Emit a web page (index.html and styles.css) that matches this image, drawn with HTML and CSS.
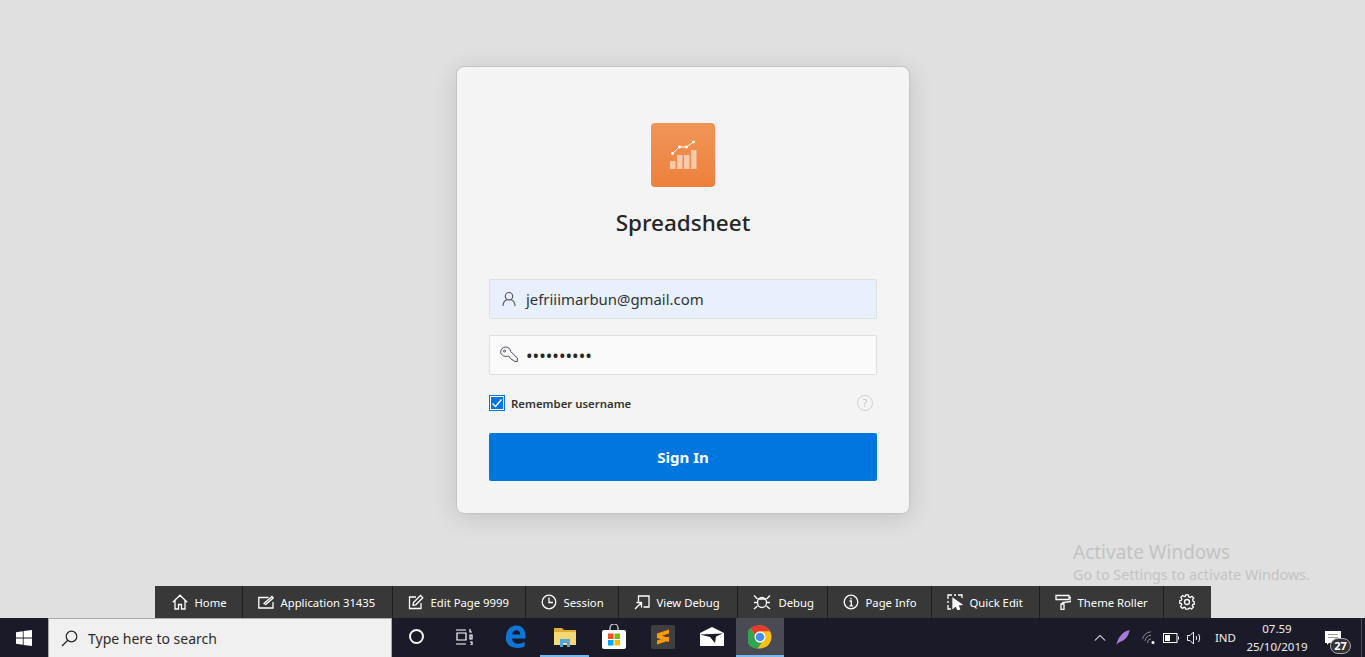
FILE: index.html
```html
<!DOCTYPE html>
<html>
<head>
    <meta charset="UTF-8">
    <title>Spreadsheet - Sign In</title>
    <link rel="stylesheet" href="styles.css">
</head>
<body>
<div class="page">
    <!-- login -->
    <main class="stage">
        <form class="card">
            <div class="logo">
                <svg width="32" height="32" viewBox="0 0 32 32">
                    <g fill="#fff" fill-opacity=".55">
                        <rect x="3" y="22" width="5.500" height="8"/>
                        <rect x="10" y="16" width="5.500" height="14"/>
                        <rect x="17" y="16" width="5.500" height="14"/>
                        <rect x="24" y="11" width="5.500" height="19"/>
                    </g>
                    <polyline points="5.500,14.500 12.500,8 19.500,8 26.500,3" fill="none" stroke="#fff" stroke-width="1"/>
                    <g fill="#fff">
                        <circle cx="5.500" cy="14.500" r="1.400"/>
                        <circle cx="12.500" cy="8" r="1.400"/>
                        <circle cx="19.500" cy="8" r="1.400"/>
                        <circle cx="26.500" cy="3" r="1.400"/>
                    </g>
                </svg>
            </div>
            <h1 class="title">Spreadsheet</h1>

            <div class="field field-filled">
                <svg class="field-icon" width="16" height="16" viewBox="0 0 16 16" fill="none" stroke="#4a4f57" stroke-width="1.100">
                    <circle cx="8" cy="5.200" r="3.700"/>
                    <path d="M2 15c0-3.400 2.200-5.700 3.900-6.300M14 15c0-3.400-2.200-5.700-3.900-6.300"/>
                </svg>
                <span class="field-text">jefriiimarbun@gmail.com</span>
            </div>

            <div class="field field-secret">
                <svg class="field-icon" width="18" height="18" viewBox="0 0 18 18" fill="none" stroke="#4a4f57" stroke-width="1">
                    <path d="M.7 6C.7 3 3 1 5.700 1 8.500 1 10.500 3 10.700 5.500L17.300 12V15.500H14.500L13.500 14H12L11 12.500 9.500 11.500 8.700 10C5.500 11 .7 10 .7 6Z"/>
                    <circle cx="4.500" cy="5" r="1"/>
                </svg>
                <span class="field-text dots">••••••••••</span>
            </div>

            <div class="remember">
                <span class="check">
                    <svg width="14" height="14" viewBox="0 0 14 14" fill="none" stroke="#fff" stroke-width="1.400"><path d="M2.500 7.500L5.500 10.500 11.500 3.500"/></svg>
                </span>
                <span class="remember-label">Remember username</span>
                <span class="help">?</span>
            </div>

            <div class="signin">Sign In</div>
        </form>
    </main>

    <!-- developer toolbar -->
    <nav class="devbar">
        <a class="dev-item dev-item-home">
            <svg class="dev-icon" viewBox="0 0 16 16"><path d="M.8 8.200L8 1.200l7.200 7M3 6.500V15h3.500v-4.500h3V15H13V6.500"/></svg>Home
        </a>
        <a class="dev-item">
            <svg class="dev-icon" viewBox="0 0 16 16"><path d="M15 8v6H.8V3.500h9.700M6 9.500l8-7 1.200 1.500-7.500 6.500z"/></svg>Application 31435
        </a>
        <a class="dev-item">
            <svg class="dev-icon" viewBox="0 0 16 16"><path d="M13 9v5.500H1.500V3H8M5.500 8.500L12.500 1.500 14.800 3.800 7.800 10.800 5 11.300z"/></svg>Edit Page 9999
        </a>
        <a class="dev-item">
            <svg class="dev-icon" viewBox="0 0 16 16"><circle cx="8" cy="8" r="6.800"/><path d="M8 3.500V8.500H12"/></svg>Session
        </a>
        <a class="dev-item">
            <svg class="dev-icon" viewBox="0 0 16 16"><path d="M4.500 7.500V2H15V13H9.500M1 15L7 9M2.500 8.500H7.500V13.500"/></svg>View Debug
        </a>
        <a class="dev-item">
            <svg class="dev-icon dev-icon-wide" viewBox="0 0 18 16"><ellipse cx="9" cy="8.500" rx="4.500" ry="5"/><path d="M5 5h8M1 1.500l3.500 3.500M17 1.500L13.500 5M1 8.500h3.500M17 8.500h-3.500M1 15l3.500-3M17 15l-3.500-3"/></svg>Debug
        </a>
        <a class="dev-item">
            <svg class="dev-icon" viewBox="0 0 16 16"><circle cx="8" cy="8" r="6.800"/><path d="M6.500 7H8.300V11.800M6.500 11.800H10M8 3.800V5.500"/></svg>Page Info
        </a>
        <a class="dev-item">
            <svg class="dev-icon" viewBox="0 0 16 16"><path d="M1 5V1H5M7 1H9M11 1H15V4M1 7V9M1 11V15H4"/><path class="dev-fill" d="M6 4.500L14.500 10.500 10.800 10.800 12.500 15 10.800 15.700 9 11.500 6 14z"/></svg>Quick Edit
        </a>
        <a class="dev-item">
            <svg class="dev-icon" viewBox="0 0 16 16"><path d="M1 1.500H14V5.500H1zM14 3.500H16V7.500L7.500 8.500V10M6 10H9V15.500H6z"/></svg>Theme Roller
        </a>
        <a class="dev-item dev-item-gear">
            <svg class="dev-icon" viewBox="0 0 16 16"><circle cx="8" cy="8" r="2.500"/><path d="M6.700 .8H9.300L9.700 2.800 11.100 3.400 12.900 2.300 14.700 4.100 13.600 5.900 14.200 7.300 15.200 7.700V10.300L13.900 10.300 13.300 11.400 14.400 13.200 12.600 15 10.800 13.900 9.700 14.400 9.300 15.200H6.700L6.300 13.700 5.200 13.300 3.400 14.400 1.600 12.600 2.700 10.800 2.100 9.400 .8 9.300V6.700L2.400 6.300 2.900 5.100 1.800 3.300 3.600 1.500 5.400 2.600 6.400 2.200z"/></svg>
        </a>
    </nav>

    <!-- windows taskbar -->
    <footer class="taskbar">
        <div class="start">
            <svg width="16" height="16" viewBox="0 0 16 16" fill="#fff"><path d="M0 2.200L6.800 1.200V7.600H0zM7.600 1.100L16 0V7.600H7.600zM0 8.400H6.800V14.800L0 13.800zM7.600 8.400H16V16L7.600 14.900z"/></svg>
        </div>
        <div class="search">
            <svg width="17" height="17" viewBox="0 0 17 17" fill="none" stroke="#222" stroke-width="1.200"><circle cx="10.500" cy="6.500" r="5.300"/><path d="M6.800 10.300L1 16"/></svg>
            <span>Type here to search</span>
        </div>
        <div class="tile tile-sys"><span class="cortana"></span></div>
        <div class="tile tile-sys">
            <svg width="17" height="16" viewBox="0 0 17 16" fill="none" stroke="#fff" stroke-width="1.200"><path d="M0 1h10M0 15h10M1 4h9v7H1zM14 0v3h2M14 6h2v4h-2zM14 13h2v3h-2"/></svg>
        </div>
        <div class="tile tile-first">
            <svg width="21" height="23" viewBox="0 0 22 24"><path fill="#0b78d7" d="M1 13C1 5 6 .5 12 .5c6 0 9.500 4.500 9.500 11.500v2H7.500c.2 3.500 3 5.500 6.500 5.500 2.500 0 5-.8 6.500-2v5c-2 1-4.500 1.500-7 1.500C6 24 .5 20 1 13zM7.500 10H16c0-2.500-1.500-4.500-4-4.500S7.800 7.500 7.500 10z"/></svg>
        </div>
        <div class="tile tile-open">
            <svg width="22" height="20" viewBox="0 0 22 20"><path fill="#e0ac3a" d="M0 1h8l2 2h12v15H0z"/><path fill="#f8d775" d="M0 5h22v13H0z"/><path fill="#4fa6e0" d="M6 12h10v8h-3v-4H9v4H6z"/></svg>
        </div>
        <div class="tile">
            <svg width="24" height="25" viewBox="0 0 24 25"><path d="M8 7V4a4 4 0 0 1 8 0v3" fill="none" stroke="#ddd" stroke-width="1.200"/><rect y="6" width="24" height="19" rx="2" fill="#fff"/><rect x="6" y="9.500" width="5.500" height="5.500" fill="#f25022"/><rect x="12.500" y="9.500" width="5.500" height="5.500" fill="#7fba00"/><rect x="6" y="16" width="5.500" height="5.500" fill="#00a4ef"/><rect x="12.500" y="16" width="5.500" height="5.500" fill="#ffb900"/></svg>
        </div>
        <div class="tile">
            <svg width="24" height="24" viewBox="0 0 24 24"><rect width="24" height="24" rx="2" fill="#3f3f3f"/><path d="M6 8.500L18 4.500V8.500L6 12.500zM6 9L18 13V17L6 13zM6 15.500L18 11.500V15.500L6 19.500z" fill="#ff9a00"/></svg>
        </div>
        <div class="tile">
            <svg width="24" height="19" viewBox="0 0 24 19"><path d="M0 6L12 0l12 6v13H0z" fill="#fff"/><path d="M0 7.500L23 6.500 16 9.500 15 16 10 10z" fill="#1a1a28"/></svg>
        </div>
        <div class="tile tile-active">
            <svg width="24" height="24" viewBox="0 0 48 48">
                <circle cx="24" cy="24" r="23" fill="#fbc116"/>
                <path d="M24 1a23 23 0 0 1 20 11.500H24a11.500 11.500 0 0 0-11 8L5 6A23 23 0 0 1 24 1z" fill="#e33b2e"/>
                <path d="M5 6l9 17a11.500 11.500 0 0 0 14 12L19 47A23 23 0 0 1 5 6z" fill="#32a350"/>
                <circle cx="24" cy="24" r="11" fill="#fff"/>
                <circle cx="24" cy="24" r="8.500" fill="#4a8af4"/>
            </svg>
        </div>

        <div class="tray">
            <svg class="tray-caret" width="12" height="7" viewBox="0 0 14 8" fill="none" stroke="#eee" stroke-width="1.200"><path d="M1 7.500L7 1.500l6 6"/></svg>
            <svg class="tray-feather" width="14" height="17" viewBox="0 0 16 18"><path d="M.5 17.500C2 9 8 2 15.500.5 15 5 12 11 7 13 5 14 3 14.500 .5 17.500z" fill="#a77bd8"/></svg>
            <svg class="tray-wifi" width="14" height="14" viewBox="0 0 14 14" fill="none" stroke="#8b8b93" stroke-width="1"><path d="M.5 8A10 10 0 0 1 9 .8M3 10A7 7 0 0 1 9 4.200M5.500 12A4 4 0 0 1 9 7.800"/><circle cx="11" cy="11.500" r="1.500" fill="#fff" stroke="none"/></svg>
            <svg class="tray-battery" width="16" height="10" viewBox="0 0 16 10" fill="none" stroke="#fff" stroke-width="1"><rect x=".5" y=".5" width="13.500" height="9"/><rect x="2" y="2" width="5" height="6" fill="#fff" stroke="none"/><path d="M15.500 3.500V6.500"/></svg>
            <svg class="tray-volume" width="16" height="14" viewBox="0 0 16 14" fill="none" stroke="#eee" stroke-width="1"><path d="M.5 4.500H3L6.500 1V13L3 9.500H.5zM9 5c.8 1.200.8 2.800 0 4M11.500 3c1.500 2.500 1.500 5.500 0 8"/></svg>
            <span class="lang">IND</span>
            <div class="clock"><span>07.59</span><span>25/10/2019</span></div>
            <div class="notify">
                <svg width="16" height="14" viewBox="0 0 16 14"><path fill="#fff" d="M0 0h16v12H4l-2 2v-2H0z"/><path fill="none" stroke="#9a9a9a" d="M3 3.500h10M3 6.500h10"/></svg>
                <span class="badge">27</span>
            </div>
            <span class="show-desktop"></span>
        </div>
    </footer>

    <div class="watermark">
        <div class="watermark-title">Activate Windows</div>
        <div class="watermark-sub">Go to Settings to activate Windows.</div>
    </div>
</div>
</body>
</html>
```

FILE: styles.css
```css
* {
    box-sizing: border-box;
}

html,
body {
    margin: 0;
    height: 100%;
    overflow: hidden;
}

body {
    background: #e0e0e0;
    font-family: "Noto Sans", "Open Sans", sans-serif;
    color: #262626;
}

.page {
    position: relative;
    display: flex;
    flex-direction: column;
    height: 657px;
}

.stage {
    flex: 1;
    display: flex;
    justify-content: center;
    align-items: flex-start;
    padding-top: 66px;
}

/* card */
.card {
    width: 454px;
    height: 448px;
    margin-left: 1px;
    padding: 56px 32px 32px;
    display: flex;
    flex-direction: column;
    background: #f4f4f4;
    border: 1px solid #c4c4c4;
    border-radius: 8px;
    box-shadow: 0 4px 24px rgba(0, 0, 0, .13);
}

.logo {
    width: 64px;
    height: 64px;
    margin: 0 auto;
    display: flex;
    align-items: center;
    justify-content: center;
    border-radius: 4px;
    background: linear-gradient(#f09558, #ee803c);
}

.title {
    margin: 20px 0 40px;
    font-size: 22.500px;
    line-height: 32px;
    font-weight: 500;
    text-align: center;
    color: #262626;
}

.field {
    height: 40px;
    margin-bottom: 16px;
    padding-left: 11px;
    display: flex;
    align-items: center;
    background: #fafafa;
    border: 1px solid #dfdfdf;
    border-radius: 2px;
}

.field-filled {
    background: #e8f0fe;
}

.field-filled .field-icon {
    margin: 0 9px 0 0;
}

.field-secret {
    padding-left: 10px;
}

.field-icon {
    flex: none;
    margin-right: 8px;
}

.field-text {
    font-size: 14.900px;
    color: #333;
}

.dots {
    font-size: 17.500px;
    color: #262626;
}

.remember {
    height: 16px;
    margin: 4px 0 22px;
    display: flex;
    align-items: center;
}

.check {
    width: 16px;
    height: 16px;
    display: flex;
    align-items: center;
    justify-content: center;
    background: #0076df;
    border: 1px solid #0076df;
    box-shadow: inset 0 0 0 1px #fff;
}

.remember-label {
    margin-left: 6px;
    font-size: 11.400px;
    font-weight: 600;
    color: #333;
}

.help {
    width: 16px;
    height: 16px;
    margin-left: auto;
    margin-right: 4px;
    border: 1px solid #d0d0d0;
    border-radius: 50%;
    font-size: 10px;
    line-height: 14px;
    text-align: center;
    color: #c4c4c4;
}

.signin {
    height: 48px;
    line-height: 48px;
    text-align: center;
    font-size: 15px;
    font-weight: 700;
    color: #fff;
    background: #0076df;
    border-radius: 2px;
}

/* developer toolbar */
.devbar {
    align-self: center;
    width: 1056px;
    height: 32px;
    display: grid;
    grid-template-columns: 88px 150px 133px 93px 119px 90px 104px 108px 124px 47px;
    background: #383838;
}

.dev-item {
    display: flex;
    align-items: center;
    padding-left: 15px;
    font-size: 11.300px;
    white-space: nowrap;
    color: #fff;
    border-right: 1px solid #1c1c1c;
}

.dev-item-home {
    padding-left: 17px;
}

.dev-item-gear {
    border-right: 0;
    padding-left: 0;
    justify-content: center;
}

.dev-icon {
    flex: none;
    width: 16px;
    height: 16px;
    margin-right: 7px;
    fill: none;
    stroke: #fff;
    stroke-width: 1.300;
}

.dev-icon-wide {
    width: 18px;
    margin-right: 8px;
}

.dev-item-gear .dev-icon {
    margin-right: 0;
}

.dev-fill {
    fill: #fff;
}

/* taskbar */
.taskbar {
    height: 39px;
    display: flex;
    align-items: stretch;
    background: #1a1a28;
}

.start {
    width: 48px;
    display: flex;
    align-items: center;
    justify-content: center;
}

.search {
    width: 344px;
    padding-left: 12px;
    display: flex;
    align-items: center;
    gap: 10px;
    font-size: 14px;
    color: #2b2b2b;
    background: #f0f0f0;
    border: 1px solid #a9a9a9;
    border-width: 1px 1px 0;
}

.tile {
    width: 49px;
    display: flex;
    align-items: center;
    justify-content: center;
    border-bottom: 2px solid transparent;
}

.tile-sys {
    width: 48px;
}

.tile-first {
    margin-left: 3px;
}

.tile-open {
    border-bottom-color: #76b9ed;
}

.tile-active {
    width: 48px;
    background: #4a4a55;
    border-bottom-color: #76b9ed;
}

.cortana {
    width: 15px;
    height: 15px;
    border: 2px solid #f4f4f4;
    border-radius: 50%;
}

.tray {
    margin-left: auto;
    display: flex;
    align-items: center;
    color: #eee;
}

.tray svg {
    flex: none;
}

.tray-caret {
    margin-right: 10px;
}

.tray-feather {
    margin-right: 12px;
}

.tray-wifi {
    margin-right: 7px;
}

.tray-battery {
    margin-right: 8px;
}

.tray-volume {
    margin-right: 12px;
}

.lang {
    font-size: 11.500px;
}

.clock {
    width: 60px;
    margin-left: 11px;
    display: flex;
    flex-direction: column;
    align-items: center;
    font-size: 11.500px;
    line-height: 18px;
}

.notify {
    position: relative;
    width: 48px;
    margin-left: 2px;
    display: flex;
    justify-content: center;
}

.badge {
    position: absolute;
    left: 21px;
    top: 7px;
    width: 21px;
    height: 16px;
    border: 1px solid #aaa;
    border-radius: 8px;
    background: #333;
    font-size: 11px;
    font-weight: 700;
    line-height: 14px;
    text-align: center;
    color: #fff;
}

.show-desktop {
    width: 1px;
    height: 100%;
    margin: 0 3px 0 4px;
    background: #4a4a55;
}

/* sits over the page */
.watermark {
    position: absolute;
    left: 1073px;
    top: 540px;
    color: #c3c3c3;
    white-space: nowrap;
    pointer-events: none;
}

.watermark-title {
    font-size: 19px;
    line-height: 24px;
}

.watermark-sub {
    font-size: 14.300px;
    line-height: 22px;
}
```
